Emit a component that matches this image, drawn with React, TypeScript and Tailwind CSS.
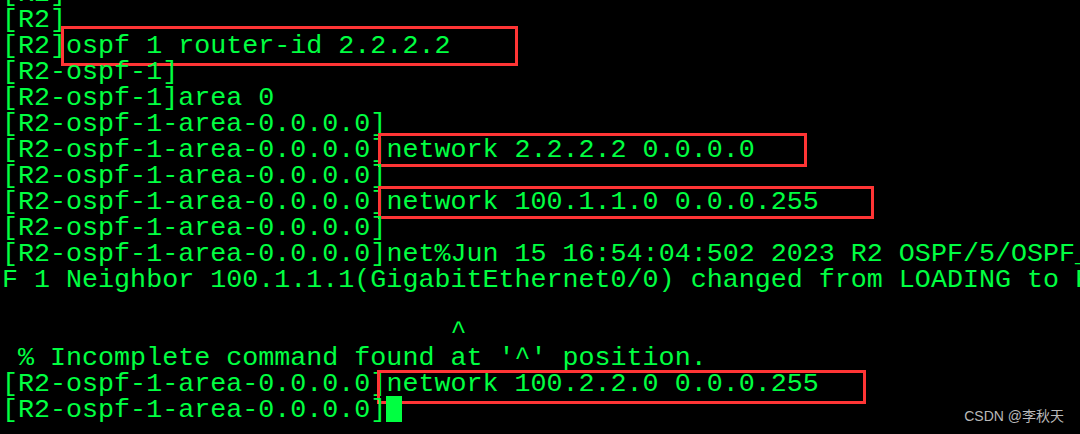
import type { ReactNode } from "react";

interface MarkProps {
  left: number;
  top: number;
  width: number;
  height: number;
}

// red annotation frame drawn over a terminal line
function Mark(props: MarkProps) {
  return (
    <span
      className="absolute border-[3px] border-[#ff3535] pointer-events-none"
      style={{ left: props.left, top: props.top, width: props.width, height: props.height }}
    />
  );
}

function Line({ children, mark }: { children?: ReactNode; mark?: MarkProps }) {
  return (
    <div className="relative h-[26px] whitespace-pre">
      {children}
      {mark && <Mark {...mark} />}
    </div>
  );
}

const prompt = "[R2-ospf-1-area-0.0.0.0]";

export default function App() {
  return (
    <div className="relative w-[1080px] h-[434px] overflow-hidden bg-black">
      <div
        className="-mt-[19px] pl-[2px] text-[26.7px] leading-[26px] text-[#00ff41]"
        style={{ fontFamily: '"Liberation Mono", "DejaVu Sans Mono", monospace' }}
      >
        <Line>[R2]</Line>
        <Line>[R2]</Line>
        <Line mark={{ left: 59, top: -7, width: 457, height: 40 }}>[R2]ospf 1 router-id 2.2.2.2</Line>
        <Line>[R2-ospf-1]</Line>
        <Line>[R2-ospf-1]area 0</Line>
        <Line>{prompt}</Line>
        <Line mark={{ left: 376, top: -4, width: 429, height: 34 }}>{prompt}network 2.2.2.2 0.0.0.0</Line>
        <Line>{prompt}</Line>
        <Line mark={{ left: 376, top: -3, width: 496, height: 33 }}>{prompt}network 100.1.1.0 0.0.0.255</Line>
        <Line>{prompt}</Line>
        <Line>{prompt}net%Jun 15 16:54:04:502 2023 R2 OSPF/5/OSPF_</Line>
        <Line>F 1 Neighbor 100.1.1.1(GigabitEthernet0/0) changed from LOADING to F</Line>
        <Line />
        <Line>{"                            ^"}</Line>
        <Line> % Incomplete command found at '^' position.</Line>
        <Line mark={{ left: 375, top: -1, width: 489, height: 34 }}>{prompt}network 100.2.2.0 0.0.0.255</Line>
        <Line>
          {prompt}
          <span className="inline-block w-[16px] h-[26px] align-top -mt-[1px] bg-[#00ff41]" />
        </Line>
      </div>
      <div
        className="absolute right-[16px] bottom-[9px] text-[14px] leading-[17px] text-[#b9b9b9]"
        style={{ fontFamily: '"Liberation Sans", "Noto Sans CJK SC", sans-serif' }}
      >
        CSDN @李秋天
      </div>
    </div>
  );
}
